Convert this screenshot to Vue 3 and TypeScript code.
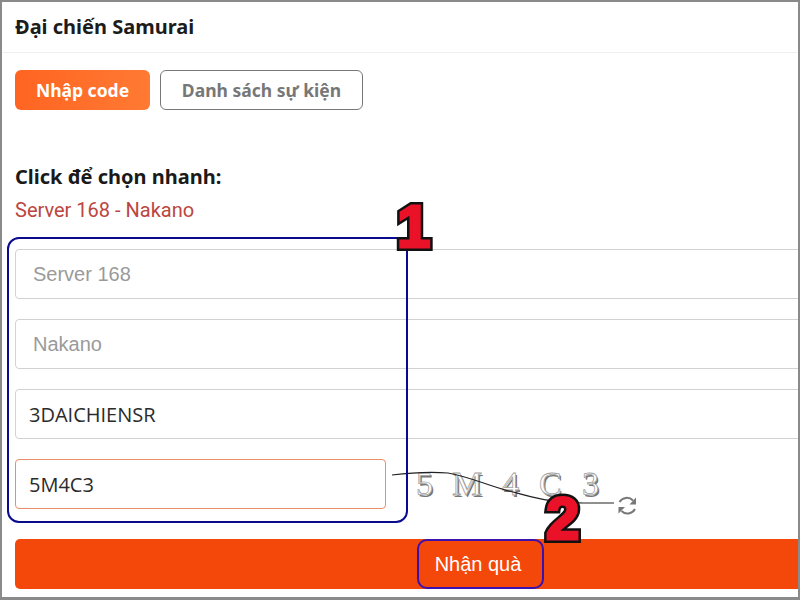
<script setup lang="ts">
const tabs = [
  { label: 'Nhập code', active: true },
  { label: 'Danh sách sự kiện', active: false },
]
const fields = ['Server 168', 'Nakano']
const captcha = [
  { ch: '5', x: 30 },
  { ch: 'M', x: 66 },
  { ch: '4', x: 116 },
  { ch: 'C', x: 153 },
  { ch: '3', x: 196 },
]
</script>

<template>
  <main class="frame">
    <h1 class="title">Đại chiến Samurai</h1>
    <div class="tabs">
      <button v-for="t in tabs" :key="t.label" class="tab" :class="{ active: t.active }">{{ t.label }}</button>
    </div>
    <section class="quick">
      <h2 class="quick-title">Click để chọn nhanh:</h2>
      <p class="quick-link">Server 168 - Nakano</p>
    </section>
    <form class="form" @submit.prevent>
      <input v-for="f in fields" :key="f" class="field placeholder" :placeholder="f" />
      <input class="field" value="3DAICHIENSR" />
      <div class="captcha-row">
        <input class="field focus" value="5M4C3" />
        <svg class="captcha" width="256" height="60" viewBox="0 0 256 60">
          <g class="captcha-shadow">
            <text v-for="c in captcha" :key="c.ch" :x="c.x + 1.5" y="37.5">{{ c.ch }}</text>
          </g>
          <g class="captcha-text">
            <text v-for="c in captcha" :key="c.ch" :x="c.x" y="36">{{ c.ch }}</text>
          </g>
          <path class="noise" d="M6 16C30 13 50 13 62 14C85 18 105 28 127 33C145 38 165 44 197 44L228 44" />
          <g class="refresh">
            <path d="M233.500 43A8.500 8.500 0 0 1 247 41.500" />
            <path d="M249 50A8.500 8.500 0 0 1 235.500 52" />
            <path class="head" d="M250 38.500V45.500H243.500ZM232.500 54.500V48H239Z" />
          </g>
        </svg>
      </div>
      <button class="submit" type="submit">Nhận quà</button>
    </form>

    <div class="mark mark-fields"></div>
    <div class="mark mark-submit"></div>
    <span class="step step-1" data-n="1">1</span>
    <span class="step step-2" data-n="2">2</span>
  </main>
</template>

<style scoped>
.frame {
  position: relative;
  width: 800px;
  height: 600px;
  box-sizing: border-box;
  border: 2px solid #8a8a8a;
  border-bottom-width: 3px;
  overflow: hidden;
  background: #fff;
  padding: 0 0 0 13px;
  color: #1a1a1a;
  font-family: "Noto Sans", sans-serif;
}
.title {
  margin: 0 0 0 -13px;
  padding: 0 0 0 13px;
  height: 51px;
  box-sizing: border-box;
  border-bottom: 1px solid #f0f0f0;
  font-size: 20px;
  font-weight: 700;
  line-height: 50px;
  color: #1c1c1c;
}
.tabs {
  display: flex;
  gap: 10px;
  margin-top: 17px;
}
.tab {
  height: 40px;
  box-sizing: border-box;
  padding: 0;
  border: 1px solid #777;
  border-radius: 6px;
  background: #fff;
  color: #777;
  font-family: "Noto Sans", sans-serif;
  font-size: 17.500px;
  font-weight: 700;
  width: 203px;
}
.tab.active {
  width: 135px;
  border: 0;
  background: linear-gradient(90deg, #ff6422, #ff7a33);
  color: #fff;
}
.quick {
  margin-top: 52px;
}
.quick-title {
  margin: 0;
  font-size: 20px;
  font-weight: 700;
  line-height: 30px;
  color: #1a1a1a;
}
.quick-link {
  margin: 3px 0 0;
  font-family: "Roboto", sans-serif;
  font-size: 20px;
  line-height: 30px;
  color: #bb4640;
}
.form {
  display: flex;
  flex-direction: column;
  gap: 20px;
  width: 926px;
  margin-top: 24px;
}
.field {
  display: block;
  width: 100%;
  height: 50px;
  box-sizing: border-box;
  border: 1px solid #d2d2d2;
  border-radius: 4px;
  padding: 0 13px;
  outline: none;
  background: #fff;
  color: #2b2b2b;
  font-family: "Open Sans", sans-serif;
  font-size: 20px;
}
.field.placeholder {
  padding: 0 17px;
  font-family: "Liberation Sans", sans-serif;
}
.field.placeholder::placeholder {
  color: #9a9a9a;
  opacity: 1;
}
.captcha-row {
  display: flex;
  height: 50px;
}
.field.focus {
  width: 371px;
  flex: none;
  border-color: #e8906a;
}
.captcha {
  flex: none;
  overflow: visible;
}
.captcha text {
  font-family: "Liberation Serif", serif;
  font-size: 34px;
}
.captcha-shadow {
  fill: #777;
}
.captcha-text {
  fill: #fff;
  stroke: #a0a0a0;
  stroke-width: 0.800;
}
.noise {
  fill: none;
  stroke: #222;
  stroke-width: 1.200;
}
.refresh path {
  fill: none;
  stroke: #777;
  stroke-width: 2;
}
.refresh .head {
  fill: #777;
  stroke: none;
}
.submit {
  height: 50px;
  margin-top: 10px;
  border: 0;
  border-radius: 5px;
  background: #f4470a;
  color: #fff;
  font-family: "Liberation Sans", sans-serif;
  font-size: 20px;
}
.mark {
  position: absolute;
  box-sizing: border-box;
}
.mark-fields {
  left: 5px;
  top: 235px;
  width: 401px;
  height: 286px;
  border: 2px solid #0a0a90;
  border-radius: 12px;
}
.mark-submit {
  left: 415px;
  top: 537px;
  width: 127px;
  height: 50px;
  border: 2px solid #3a10b0;
  border-radius: 10px;
}
.step {
  position: absolute;
  font-family: "Liberation Sans", sans-serif;
  font-weight: 700;
  font-size: 60px;
  line-height: 60px;
  color: #111;
  -webkit-text-stroke: 8px #111;
}
.step::after {
  content: attr(data-n);
  position: absolute;
  left: 0;
  top: 0;
  color: #ea1228;
  -webkit-text-stroke: 3px #ea1228;
}
.step-1 {
  left: 395px;
  top: 195px;
}
.step-2 {
  left: 544px;
  top: 487px;
}
</style>
